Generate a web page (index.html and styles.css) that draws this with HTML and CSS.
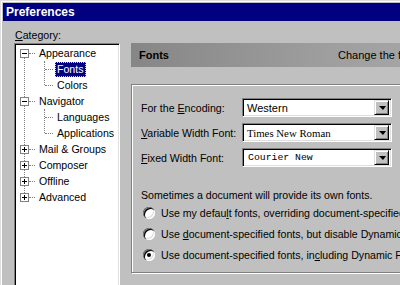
FILE: index.html
```html
<!DOCTYPE html>
<html lang="en">
<head>
    <meta charset="UTF-8">
    <title>Preferences</title>
    <link rel="stylesheet" href="styles.css">
</head>
<body>
    <div class="window">
        <div class="titlebar">Preferences</div>

        <div class="content">
            <div class="sidebar">
                <div class="field-label"><u>C</u>ategory:</div>
                <div class="tree">
                    <div class="tree-list">
                        <div class="tree-row top">
                            <span class="expander open"></span><span class="hline"></span><span class="node">Appearance</span>
                        </div>
                        <div class="children">
                            <div class="tree-row child"><span class="hline"></span><span class="node selected">Fonts</span></div>
                            <div class="tree-row child"><span class="hline"></span><span class="node">Colors</span></div>
                        </div>
                        <div class="tree-row top">
                            <span class="expander open"></span><span class="hline"></span><span class="node">Navigator</span>
                        </div>
                        <div class="children">
                            <div class="tree-row child"><span class="hline"></span><span class="node">Languages</span></div>
                            <div class="tree-row child"><span class="hline"></span><span class="node">Applications</span></div>
                        </div>
                        <div class="tree-row top">
                            <span class="expander"></span><span class="hline"></span><span class="node">Mail &amp; Groups</span>
                        </div>
                        <div class="tree-row top">
                            <span class="expander"></span><span class="hline"></span><span class="node">Composer</span>
                        </div>
                        <div class="tree-row top">
                            <span class="expander"></span><span class="hline"></span><span class="node">Offline</span>
                        </div>
                        <div class="tree-row top">
                            <span class="expander"></span><span class="hline"></span><span class="node">Advanced</span>
                        </div>
                    </div>
                </div>
            </div>

            <div class="panel">
                <div class="panel-header">
                    <span class="panel-title">Fonts</span>
                    <span class="panel-hint">Change the fonts in your display</span>
                </div>

                <div class="groupbox">
                    <div class="font-row">
                        <span class="row-label">For the <u>E</u>ncoding:</span>
                        <div class="select">
                            <span class="select-value">Western</span>
                            <span class="select-button"><span class="arrow"></span></span>
                        </div>
                    </div>
                    <div class="font-row">
                        <span class="row-label"><u>V</u>ariable Width Font:</span>
                        <div class="select">
                            <span class="select-value serif">Times New Roman</span>
                            <span class="select-button"><span class="arrow"></span></span>
                        </div>
                    </div>
                    <div class="font-row">
                        <span class="row-label"><u>F</u>ixed Width Font:</span>
                        <div class="select">
                            <span class="select-value mono">Courier New</span>
                            <span class="select-button"><span class="arrow"></span></span>
                        </div>
                    </div>

                    <p class="note">Sometimes a document will provide its own fonts.</p>

                    <div class="radio-row">
                        <span class="radio"></span>
                        <span>Use my defau<u>l</u>t fonts, overriding document-specified fonts</span>
                    </div>
                    <div class="radio-row">
                        <span class="radio"></span>
                        <span>Use <u>d</u>ocument-specified fonts, but disable Dynamic Fonts</span>
                    </div>
                    <div class="radio-row">
                        <span class="radio checked"></span>
                        <span>Use document-specified fonts, in<u>c</u>luding Dynamic Fonts</span>
                    </div>
                </div>
            </div>
        </div>
    </div>
</body>
</html>
```

FILE: styles.css
```css
:root {
    --face: #c0c0c0;
    --shadow: #808080;
    --light: #dfdfdf;
    --navy: #000080;
}

html, body {
    margin: 0;
    padding: 0;
    width: 400px;
    height: 285px;
    overflow: hidden;
    background: var(--face);
}

body {
    font-family: 'Liberation Sans', Arial, sans-serif;
    font-size: 10.6px;
    color: #000;
}

u {
    text-decoration: underline;
    text-underline-offset: 1px;
}

.window {
    width: 560px;
    height: 285px;
    padding: 3px 0 0 3px;
    box-sizing: border-box;
    box-shadow: inset 1px 1px 0 var(--light), inset 2px 2px 0 #fff;
}

.titlebar {
    height: 18px;
    line-height: 18px;
    padding-left: 3px;
    background: var(--navy);
    color: #fff;
    font-weight: bold;
    font-size: 12px;
}

.content {
    display: flex;
    padding: 7px 0 0 11px;
}

/* category tree */

.sidebar {
    width: 106px;
    flex-shrink: 0;
}

.field-label {
    height: 14px;
    line-height: 14px;
    margin: 0 0 1px 1px;
}

.tree {
    height: 260px;
    background: #fff;
    border-top: 1px solid var(--shadow);
    border-left: 1px solid var(--shadow);
    border-right: 1px solid #fff;
    border-bottom: 1px solid #fff;
    box-shadow: inset 1px 1px 0 #000, inset -1px -1px 0 var(--light);
    padding: 1px;
}

.tree-list {
    position: relative;
}

.tree-list::before {
    content: "";
    position: absolute;
    left: 8px;
    top: 8px;
    bottom: 8px;
    border-left: 1px dotted var(--shadow);
}

.tree-row {
    height: 16px;
    display: flex;
    align-items: center;
    position: relative;
}

.tree-row.top {
    padding-left: 4px;
}

.expander {
    width: 7px;
    height: 7px;
    border: 1px solid var(--shadow);
    background: #fff;
    position: relative;
    z-index: 1;
}

.expander::before,
.expander::after {
    content: "";
    position: absolute;
    background: #000;
}

.expander::before {
    left: 1px;
    top: 3px;
    width: 5px;
    height: 1px;
}

.expander::after {
    left: 3px;
    top: 1px;
    width: 1px;
    height: 5px;
}

.expander.open::after {
    display: none;
}

.top .hline {
    width: 6px;
    border-top: 1px dotted var(--shadow);
}

.children {
    position: relative;
}

.children::before {
    content: "";
    position: absolute;
    left: 28px;
    top: 0;
    bottom: 8px;
    border-left: 1px dotted var(--shadow);
}

.tree-row.child {
    padding-left: 29px;
}

.child .hline {
    width: 8px;
    border-top: 1px dotted var(--shadow);
}

.node {
    margin-left: 2px;
    padding: 0 1px;
    line-height: 13px;
    border: 1px solid transparent;
    white-space: nowrap;
}

.node.selected {
    background: var(--navy);
    color: #fff;
    border: 1px dotted #e0e080;
}

/* right panel */

.panel {
    margin-left: 11px;
    padding-top: 15px;
    flex: 1;
}

.panel-header {
    height: 24px;
    display: flex;
    align-items: center;
    padding-left: 8px;
    background: linear-gradient(to right, #868686, #9e9e9e 45%, #aaaaaa 80%, #b4b4b4);
}

.panel-title {
    font-weight: bold;
    font-size: 11px;
    width: 199px;
}

.panel-hint {
    font-size: 11px;
    white-space: nowrap;
}

.groupbox {
    margin-top: 17px;
    padding: 13px 0 7px 9px;
    border: 1px solid var(--shadow);
    box-shadow: inset 1px 1px 0 #fff, 1px 1px 0 #fff;
}

.font-row {
    display: flex;
    align-items: center;
    height: 19px;
    margin-bottom: 6px;
}

.row-label {
    width: 101px;
    white-space: nowrap;
}

.select {
    width: 150px;
    height: 19px;
    box-sizing: border-box;
    display: flex;
    align-items: center;
    justify-content: space-between;
    background: #fff;
    border-top: 1px solid var(--shadow);
    border-left: 1px solid var(--shadow);
    border-right: 1px solid #fff;
    border-bottom: 1px solid #fff;
    box-shadow: inset 1px 1px 0 #000, inset -1px -1px 0 var(--light);
    padding: 2px;
}

.select-value {
    padding-left: 2px;
    white-space: nowrap;
    font-size: 11px;
}

.select-value.serif {
    font-family: 'Liberation Serif', 'Times New Roman', serif;
    font-size: 10.8px;
}

.select-value.mono {
    font-family: 'Liberation Mono', 'Courier New', monospace;
    font-size: 9.8px;
    padding-left: 3px;
}

.select-button {
    width: 15px;
    height: 15px;
    box-sizing: border-box;
    background: var(--face);
    border-top: 1px solid var(--light);
    border-left: 1px solid var(--light);
    border-right: 1px solid #000;
    border-bottom: 1px solid #000;
    box-shadow: inset 1px 1px 0 #fff, inset -1px -1px 0 var(--shadow);
    display: flex;
    align-items: center;
    justify-content: center;
}

.arrow {
    width: 0;
    height: 0;
    border-left: 4px solid transparent;
    border-right: 3px solid transparent;
    border-top: 4px solid #000;
    margin-left: 1px;
}

.note {
    margin: 21px 0 0;
    line-height: 14px;
    white-space: nowrap;
}

.radio-row {
    height: 21px;
    display: flex;
    align-items: center;
    gap: 6px;
    padding-left: 2px;
    white-space: nowrap;
}

.radio {
    width: 12px;
    height: 12px;
    flex-shrink: 0;
    border-radius: 50%;
    background: #fff;
    box-shadow: inset 1px 1px 0 var(--shadow), inset 2px 2px 0 #000,
                inset -1px -1px 0 #fff, inset -2px -2px 0 var(--light);
    display: flex;
    align-items: center;
    justify-content: center;
}

.radio.checked::after {
    content: "";
    width: 4px;
    height: 4px;
    border-radius: 50%;
    background: #000;
}
```
